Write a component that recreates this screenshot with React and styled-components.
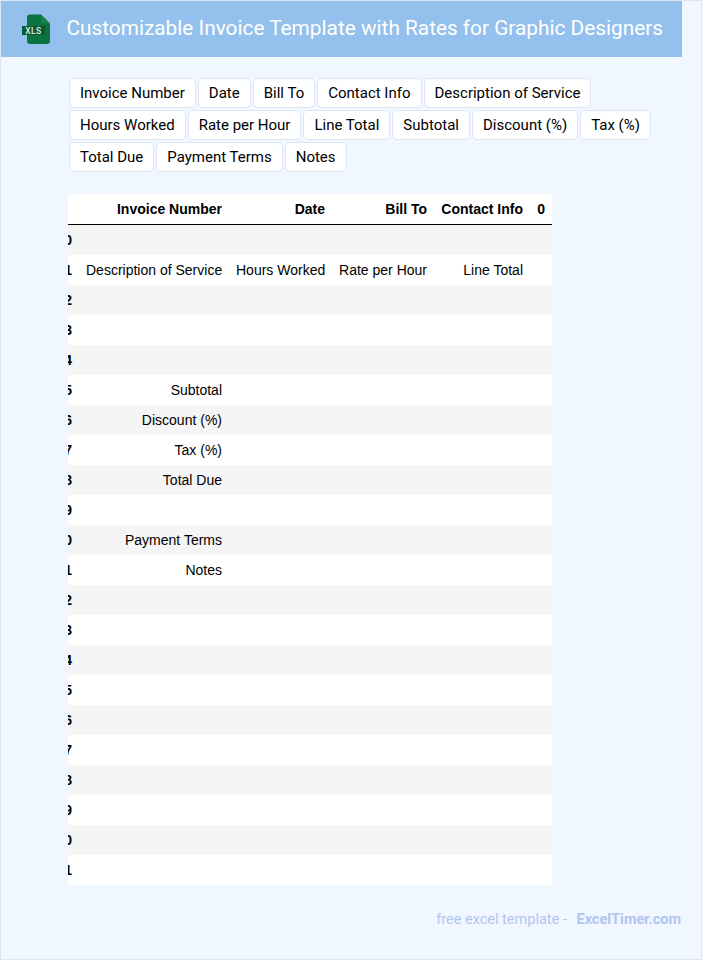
import React from "react";
import styled, { createGlobalStyle } from "styled-components";

const Global = createGlobalStyle`
  html, body { margin: 0; padding: 0; }
  body { background: #f1f7ff; font-family: Roboto, "Liberation Sans", sans-serif; }
`;

const Page = styled.div`
  box-sizing: border-box;
  width: 702px;
  height: 960px;
  border: 1px solid #dde6f0;
  background: #f1f7ff;
  display: flex;
  flex-direction: column;
  overflow: hidden;
`;

const Header = styled.header`
  width: 681px;
  height: 56px;
  flex: none;
  background: #93c0ec;
  display: flex;
  align-items: center;
  padding-left: 21px;
  gap: 14.5px;
  box-sizing: border-box;
`;

const Title = styled.h1`
  margin: 0 0 2px;
  font-size: 20.8px;
  font-weight: 400;
  color: #fff;
  white-space: nowrap;
`;

const Chips = styled.div`
  display: flex;
  flex-wrap: wrap;
  gap: 2px;
  margin: 21px 0 0 68px;
  width: 600px;
`;

const Chip = styled.span`
  box-sizing: border-box;
  height: 30px;
  padding: 0 10px;
  background: #fff;
  border: 1px solid #dbe5f3;
  border-radius: 5px;
  font-size: 15px;
  line-height: 28px;
  color: #000;
  white-space: nowrap;
`;

const TableClip = styled.div`
  width: 484px;
  margin: 22px 0 0 67px;
  overflow: hidden;
`;

const Table = styled.table`
  margin-left: -19px;
  border-collapse: separate;
  border-spacing: 0;
  table-layout: fixed;
  width: 503px;
  font-family: "Liberation Sans", Arial, sans-serif;
  font-size: 14px;
  color: #000;
`;

const HeadRow = styled.tr`
  background: #fff;
`;

const Row = styled.tr`
  background: ${(p) => (p.$odd ? "#fff" : "#f5f5f5")};
`;

const Th = styled.th`
  box-sizing: border-box;
  height: 30px;
  padding: 0 7px;
  text-align: right;
  font-weight: 700;
  white-space: nowrap;
`;

const HeadCell = styled(Th)`
  height: 31px;
  padding-bottom: 1px;
  border-bottom: 1px solid #000;
`;

const Td = styled.td`
  box-sizing: border-box;
  height: 30px;
  padding: 0 7px;
  text-align: right;
  white-space: nowrap;
`;

const Footer = styled.footer`
  margin: 26px 20px 0 0;
  align-self: flex-end;
  font-size: 14.5px;
  color: #b1c5f2;
  white-space: pre;
`;

const FooterLink = styled.b`
  font-weight: 700;
  margin-left: 6px;
`;

const FileIcon = () => (
  <svg width="30" height="32" viewBox="0 0 30 32" style={{ flex: "none" }}>
    <path
      d="M8 1.5C6 1.5 5 2.5 5 4.5V28c0 2 1 3 3 3h17c2 0 3-1 3-3V10.5L19 1.5Z"
      fill="#0a7341"
    />
    <path d="M19 1.5V8.5c0 1.5 1 2 2 2h7Z" fill="#17844f" />
    <rect x="0" y="13" width="23" height="9" fill="#0a5a34" />
    <text
      x="11.5"
      y="20.7"
      textAnchor="middle"
      fontFamily="Roboto, sans-serif"
      fontSize="8.5"
      fontWeight="500"
      letterSpacing="0.4"
      fill="#dff0e6"
    >
      XLS
    </text>
  </svg>
);

const chips = [
  "Invoice Number", "Date", "Bill To", "Contact Info", "Description of Service",
  "Hours Worked", "Rate per Hour", "Line Total", "Subtotal", "Discount (%)", "Tax (%)",
  "Total Due", "Payment Terms", "Notes",
];

const rows = Array.from({ length: 22 }, () => []);
rows[1] = ["Description of Service", "Hours Worked", "Rate per Hour", "Line Total"];
rows[5] = ["Subtotal"];
rows[6] = ["Discount (%)"];
rows[7] = ["Tax (%)"];
rows[8] = ["Total Due"];
rows[10] = ["Payment Terms"];
rows[11] = ["Notes"];

const widths = [30, 150, 103, 102, 96, 22];

export default function App() {
  return (
    <Page>
      <Global />
      <Header>
        <FileIcon />
        <Title>Customizable Invoice Template with Rates for Graphic Designers</Title>
      </Header>
      <Chips>
        {chips.map((c) => (
          <Chip key={c}>{c}</Chip>
        ))}
      </Chips>
      <TableClip>
        <Table>
          <colgroup>
            {widths.map((w, i) => (
              <col key={i} style={{ width: w }} />
            ))}
          </colgroup>
          <thead>
            <HeadRow>
              <HeadCell />
              <HeadCell>Invoice Number</HeadCell>
              <HeadCell>Date</HeadCell>
              <HeadCell>Bill To</HeadCell>
              <HeadCell>Contact Info</HeadCell>
              <HeadCell>0</HeadCell>
            </HeadRow>
          </thead>
          <tbody>
            {rows.map((r, i) => (
              <Row key={i} $odd={i % 2 === 1}>
                <Th>{i}</Th>
                {[0, 1, 2, 3, 4].map((j) => (
                  <Td key={j}>{r[j] || ""}</Td>
                ))}
              </Row>
            ))}
          </tbody>
        </Table>
      </TableClip>
      <Footer>
        free excel template - <FooterLink>ExcelTimer.com</FooterLink>
      </Footer>
    </Page>
  );
}
